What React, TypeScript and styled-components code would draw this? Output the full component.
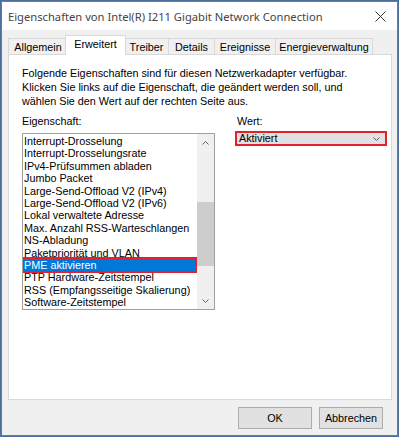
import styled, { createGlobalStyle } from "styled-components";

const tabs = [
  { label: "Allgemein", width: 59 },
  { label: "Erweitert", width: 61, active: true },
  { label: "Treiber", width: 44 },
  { label: "Details", width: 46 },
  { label: "Ereignisse", width: 61 },
  { label: "Energieverwaltung", width: 98 },
];

const properties = [
  "Interrupt-Drosselung",
  "Interrupt-Drosselungsrate",
  "IPv4-Prüfsummen abladen",
  "Jumbo Packet",
  "Large-Send-Offload V2 (IPv4)",
  "Large-Send-Offload V2 (IPv6)",
  "Lokal verwaltete Adresse",
  "Max. Anzahl RSS-Warteschlangen",
  "NS-Abladung",
  "Paketpriorität und VLAN",
  "PME aktivieren",
  "PTP Hardware-Zeitstempel",
  "RSS (Empfangsseitige Skalierung)",
  "Software-Zeitstempel",
];

const selected = "PME aktivieren";

const Chevron = ({ up }: { up?: boolean }) => (
  <svg width="7" height="4" viewBox="0 0 7 4">
    <path
      d={up ? "M0.5 3.5 L3.5 0.5 L6.5 3.5" : "M0.5 0.5 L3.5 3.5 L6.5 0.5"}
      fill="none"
      stroke="#606060"
      strokeWidth="1"
    />
  </svg>
);

const App = () => {
  return (
    <>
      <GlobalStyle />
      <Window>
        <TitleBar>
          <Title>Eigenschaften von Intel(R) I211 Gigabit Network Connection</Title>
          <CloseIcon width="11" height="11" viewBox="0 0 11 11">
            <path d="M0.5 0.5 L10.5 10.5 M10.5 0.5 L0.5 10.5" stroke="#333" strokeWidth="1" />
          </CloseIcon>
        </TitleBar>

        <Body>
          <TabStrip>
            {tabs.map((t) => (
              <Tab key={t.label} $active={t.active} $width={t.width}>
                {t.label}
              </Tab>
            ))}
          </TabStrip>

          <Panel>
            <Intro>
              Folgende Eigenschaften sind für diesen Netzwerkadapter verfügbar.
              <br />
              Klicken Sie links auf die Eigenschaft, die geändert werden soll, und
              <br />
              wählen Sie den Wert auf der rechten Seite aus.
            </Intro>

            <Columns>
              <Column>
                <Label>Eigenschaft:</Label>
                <ListBox>
                  <Items>
                    {properties.map((p) => (
                      <Item key={p} $selected={p === selected}>
                        {p}
                      </Item>
                    ))}
                  </Items>
                  <ScrollBar>
                    <ArrowBox>
                      <Chevron up />
                    </ArrowBox>
                    <Track>
                      <Thumb />
                    </Track>
                    <ArrowBox>
                      <Chevron />
                    </ArrowBox>
                  </ScrollBar>
                </ListBox>
              </Column>

              <Column>
                <Label>Wert:</Label>
                <Combo>
                  <span>Aktiviert</span>
                  <Chevron />
                </Combo>
              </Column>
            </Columns>
          </Panel>

          <Footer>
            <Button $width={74}>OK</Button>
            <Button $width={64}>Abbrechen</Button>
          </Footer>
        </Body>
      </Window>
    </>
  );
};

export default App;

const GlobalStyle = createGlobalStyle`
  html, body {
    margin: 0;
    padding: 0;
    background: #4c6f9e;
  }
  body {
    width: 399px;
    height: 437px;
    overflow: hidden;
  }
`;

const Window = styled.div`
  box-sizing: border-box;
  margin: 1px 0 0 1px;
  width: 397px;
  height: 435px;
  border: 1px solid #707a8a;
  display: flex;
  flex-direction: column;
  background: #f0f0f0;
  font-family: "Liberation Sans", Arial, sans-serif;
  font-size: 10.8px;
  color: #000;
`;

const TitleBar = styled.div`
  height: 28px;
  background: #fff;
  display: flex;
  align-items: center;
  justify-content: space-between;
  padding: 0 10px 0 6px;
`;

const Title = styled.div`
  font-family: "Noto Sans", "Open Sans", sans-serif;
  font-size: 11.2px;
  color: #444;
`;

const CloseIcon = styled.svg`
  margin-top: 1px;
  margin-right: 1px;
`;

const Body = styled.div`
  flex: 1;
  display: flex;
  flex-direction: column;
  padding: 6px 5px 0 6px;
`;

const TabStrip = styled.div`
  display: flex;
  align-items: flex-end;
  height: 19px;
  position: relative;
  z-index: 1;
`;

const Tab = styled.div<{ $active?: boolean; $width: number }>`
  box-sizing: border-box;
  flex: none;
  width: ${(p) => p.$width}px;
  height: ${(p) => (p.$active ? "20px" : "17px")};
  padding-top: 2px;
  margin: ${(p) => (p.$active ? "0 -2px" : "0")};
  background: ${(p) => (p.$active ? "#fff" : "#f0f0f0")};
  border-top: 1px solid #d9d9d9;
  border-left: 1px solid #d9d9d9;
  border-right: ${(p) => (p.$active ? "1px solid #d9d9d9" : "none")};
  border-bottom: ${(p) => (p.$active ? "none" : "1px solid #d9d9d9")};
  position: relative;
  z-index: ${(p) => (p.$active ? 2 : 1)};
  white-space: nowrap;
  text-align: center;
  line-height: 13px;
  &:last-child {
    border-right: 1px solid #d9d9d9;
  }
`;

const Panel = styled.div`
  box-sizing: border-box;
  height: 346px;
  margin-top: -1px;
  background: #fff;
  border: 1px solid #d9d9d9;
  padding: 11px 13px 0 13px;
`;

const Intro = styled.p`
  margin: 0;
  line-height: 14px;
`;

const Columns = styled.div`
  display: grid;
  grid-template-columns: 193px 150px;
  column-gap: 22px;
  margin-top: 7px;
`;

const Column = styled.div`
  display: flex;
  flex-direction: column;
`;

const Label = styled.div`
  line-height: 13px;
  height: 13px;
  margin-bottom: 5px;
`;

const ListBox = styled.div`
  box-sizing: border-box;
  height: 177px;
  border: 1px solid #a0a0a0;
  display: flex;
  background: #fff;
`;

const Items = styled.div`
  flex: 1;
  padding-top: 1px;
  overflow: hidden;
`;

const Item = styled.div<{ $selected?: boolean }>`
  height: 12.4px;
  line-height: 12.4px;
  padding-left: 1px;
  margin-right: ${(p) => (p.$selected ? "2px" : "0")};
  white-space: nowrap;
  background: ${(p) => (p.$selected ? "#0078d7" : "transparent")};
  color: ${(p) => (p.$selected ? "#fff" : "#000")};
  outline: ${(p) => (p.$selected ? "2px solid #e3202b" : "none")};
  position: relative;
`;

const ScrollBar = styled.div`
  width: 17px;
  display: flex;
  flex-direction: column;
  background: #f0f0f0;
`;

const ArrowBox = styled.div`
  height: 17px;
  display: flex;
  align-items: center;
  justify-content: center;
`;

const Track = styled.div`
  flex: 1;
  position: relative;
`;

const Thumb = styled.div`
  position: absolute;
  left: 0;
  right: 0;
  top: 51px;
  height: 64px;
  background: #cdcdcd;
`;

const Combo = styled.div`
  box-sizing: border-box;
  height: 15px;
  margin-top: -2px;
  margin-left: -2px;
  width: 152px;
  border: 2px solid #e3202b;
  background: #e1e1e1;
  display: flex;
  align-items: center;
  justify-content: space-between;
  padding: 0 5px 0 2px;
  line-height: 11px;
`;

const Footer = styled.div`
  display: flex;
  justify-content: flex-end;
  gap: 7px;
  padding: 7px 9px 0 0;
`;

const Button = styled.button<{ $width: number }>`
  box-sizing: border-box;
  width: ${(p) => p.$width}px;
  height: 22px;
  background: #e1e1e1;
  border: 1px solid #adadad;
  font-family: "Liberation Sans", Arial, sans-serif;
  font-size: 10.8px;
  color: #000;
  padding: 0;
`;
